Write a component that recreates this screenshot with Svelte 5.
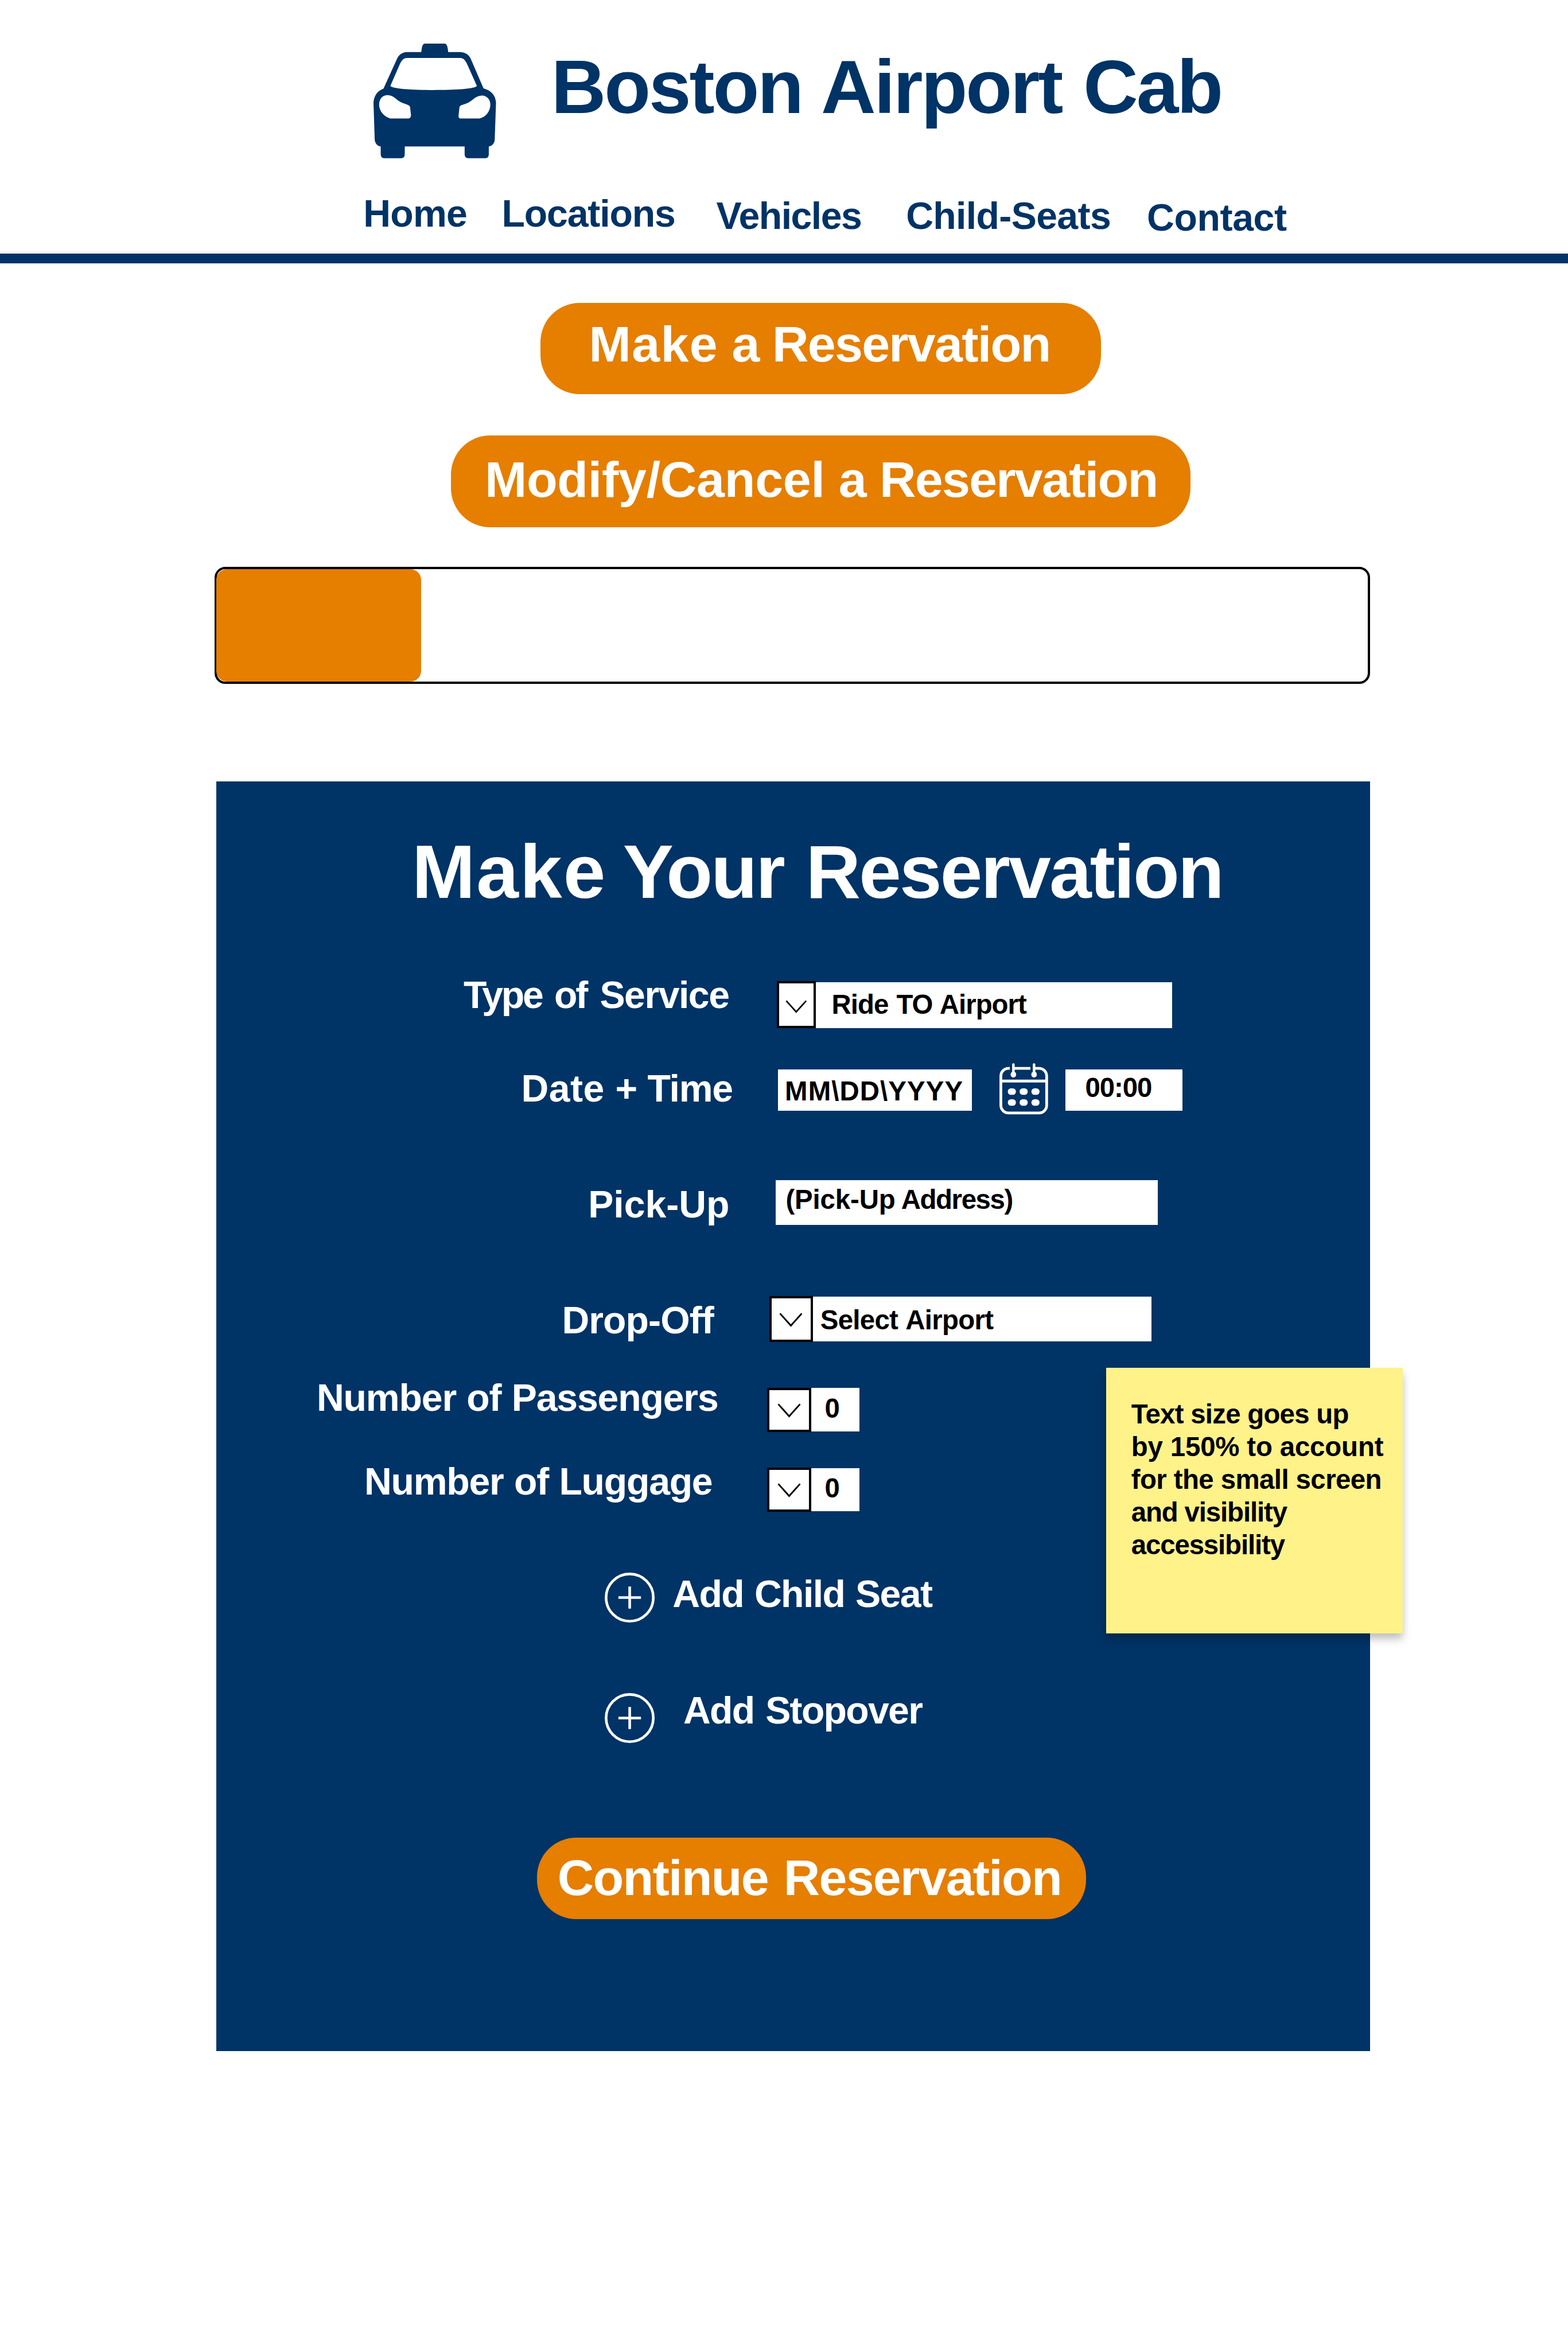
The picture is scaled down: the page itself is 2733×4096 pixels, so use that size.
<script>
  const nav = [
    { label: 'Home', cls: 'home' },
    { label: 'Locations', cls: 'locations' },
    { label: 'Vehicles', cls: 'vehicles' },
    { label: 'Child-Seats', cls: 'child-seats' },
    { label: 'Contact', cls: 'contact' }
  ];
</script>

{#snippet dropdown()}
  <span class="arrow">
    <svg viewBox="0 0 48 30" aria-hidden="true">
      <path d="M1.8 1.6 24 26.4 46.2 1.6" fill="none" stroke="#000" stroke-width="3.4" />
    </svg>
  </span>
{/snippet}

{#snippet plus()}
  <svg class="plus" viewBox="0 0 102 102" fill="none" stroke="#fff" stroke-width="5.4" aria-hidden="true">
    <circle cx="51" cy="51" r="48.2" />
    <path d="M28 51H74M51 28.5V73.5" />
  </svg>
{/snippet}

<div class="page">
  <header>
    <div class="brand">
      <svg class="taxi" viewBox="0 0 250 234" aria-hidden="true">
        <path
          fill="#003366"
          fill-rule="evenodd"
          d="M97.6 17.3C98.3 9 99.5 4.5 101 2.2Q102.3 0 105 0H145Q147.7 0 149 2.2C150.5 4.5 151.8 9 152.5 17.3H177C187 17.5 195 23 198.5 31L224.5 91.3C241 96 249.5 106 250 121L247.4 196C247 203 242 209 235.3 210V226Q235.3 234 227.3 234H194Q186 234 186 226V210H63.8V226Q63.8 234 55.8 234H22.7Q14.7 234 14.7 226V210C8 209 3 203 2.5 196L0 121C.5 107 8 96.5 20.4 92L48 31C51.5 23 59 17.5 68 17.3Z
             M68 29.3H177C183 29.3 187 33.5 190.7 41L211 86.3C207 92 171 94.7 124 94.7C77 94.7 38.5 92 34.4 86.3L54.2 41C58 33.5 62 29.3 68 29.3Z
             M28 105C17.5 105.5 11.5 114 11.5 124.3C11.5 138 21.5 149 34.4 152.7H71.5C74.5 152.7 76.5 149.5 76.5 146L74.6 129C73 125 65 123.5 58.7 121C46.5 116 42.5 105 28 105Z
             M221.5 106C231 106 238.5 114 238.5 124.3C238.5 138 229 150 216.2 152.7H177.3C175 152.7 173.5 150.5 173.5 147.7L175.4 130C176 125.5 185 124.5 192.6 121C203 116 208.5 106 221.5 106Z"
        />
      </svg>
      <h1>Boston Airport Cab</h1>
    </div>
    <nav>
      {#each nav as item}
        <span class={item.cls}>{item.label}</span>
      {/each}
    </nav>
  </header>

  <div class="actions">
    <button class="pill make"><span><span class="wide">Make</span> a Reservation</span></button>
    <button class="pill modify"><span><span class="semi">Modify/Cancel</span> a Reservation</span></button>
  </div>

  <div class="progress"><div class="fill"></div></div>

  <section class="panel">
    <h2><span class="wide">Make</span> Your Reservation</h2>

    <div class="row service">
      <span class="label"><span class="tight">Type of</span> Service</span>
      {@render dropdown()}
      <span class="field">Ride TO Airport</span>
    </div>

    <div class="row datetime">
      <span class="label"><span class="wide">Date</span> + Time</span>
      <span class="field date">MM\DD\YYYY</span>
      <svg class="calendar" viewBox="0 0 99.3 104.6" aria-hidden="true">
        <g fill="none" stroke="#fff" stroke-width="5.6">
          <path d="M21.2 10.7H18.5A15.6 15.6 0 0 0 2.9 26.3V86.2A15.6 15.6 0 0 0 18.5 101.8H80.8A15.6 15.6 0 0 0 96.4 86.2V26.3A15.6 15.6 0 0 0 80.8 10.7H71" />
          <path d="M28.5 10.7H63.2M3 36.6H96" />
          <path d="M28.5 2.8V20M70.7 2.8V20" stroke-width="5.2" stroke-linecap="round" />
        </g>
        <g fill="#fff">
          <ellipse cx="28.5" cy="23.4" rx="5.7" ry="6" />
          <ellipse cx="70.7" cy="23.4" rx="5.7" ry="6" />
          {#each [51.5, 73.8] as y}
            {#each [17.1, 41.2, 65.3] as x}
              <rect {x} {y} width="16.5" height="13.2" rx="6.2" />
            {/each}
          {/each}
        </g>
      </svg>
      <span class="field time">00:00</span>
    </div>

    <div class="row pickup">
      <span class="label">Pick-Up</span>
      <span class="field"><span class="semi">(Pick-Up</span> Address)</span>
    </div>

    <div class="row dropoff">
      <span class="label">Drop-Off</span>
      {@render dropdown()}
      <span class="field">Select Airport</span>
    </div>

    <div class="row count passengers">
      <span class="label">Number of Passengers</span>
      {@render dropdown()}
      <span class="field">0</span>
    </div>

    <div class="row count luggage">
      <span class="label">Number of Luggage</span>
      {@render dropdown()}
      <span class="field">0</span>
    </div>

    <div class="row add seat">
      {@render plus()}
      <span class="label">Add Child Seat</span>
    </div>

    <div class="row add stopover">
      {@render plus()}
      <span class="label">Add Stopover</span>
    </div>

    <button class="pill continue"><span>Continue Reservation</span></button>

    <aside class="note">
      <span class="l1">Text size goes up</span>
      <span class="l2">by 150% to account</span>
      <span class="l3">for the small screen</span>
      <span class="l4">and visibility</span>
      <span class="l4">accessibility</span>
    </aside>
  </section>
</div>

<style>
  /* 1rem is 1/32 of the page width, so every length scales with the window */
  :global(html) {
    font-size: calc(100vw / 32);
  }

  :global(body) {
    margin: 0;
    background: #fff;
    overflow: hidden;
  }

  .page {
    height: 47.96rem;
    overflow: hidden;
    background: #fff;
    color: #003366;
    font-family: 'Liberation Sans', Arial, sans-serif;
    font-weight: 700;
    line-height: 1;
    white-space: nowrap;
  }

  .page,
  .page * {
    box-sizing: border-box;
  }

  svg {
    display: block;
    flex: none;
    overflow: visible;
  }

  h1,
  h2 {
    margin: 0;
    font-size: 1.55rem;
    font-weight: 700;
    line-height: 1;
  }

  /* tracking of single words inside a line */
  .wide {
    letter-spacing: 0.0155em;
  }

  .semi {
    letter-spacing: -0.003em;
  }

  .tight {
    letter-spacing: -0.049em;
  }

  header {
    height: 5.375rem;
    padding-top: 0.89rem;
    border-bottom: 0.21rem solid #003366;
  }

  .brand {
    display: flex;
    align-items: flex-start;
    gap: 1.125rem;
    padding-left: 7.625rem;
  }

  .taxi {
    width: 2.5rem;
    height: 2.34rem;
  }

  h1 {
    margin-top: 0.101rem;
    letter-spacing: -0.0235em;
    word-spacing: 0.032em;
  }

  nav {
    display: grid;
    grid-template-columns: 2.824rem 4.38rem 3.87rem 4.917rem auto;
    align-items: start;
    margin-top: 0.742rem;
    padding-left: 7.416rem;
    font-size: 0.775rem;
  }

  .home {
    letter-spacing: -0.0121em;
  }

  .locations {
    letter-spacing: -0.0176em;
  }

  .vehicles {
    margin-top: 0.04rem;
    letter-spacing: -0.0233em;
  }

  .child-seats {
    margin-top: 0.04rem;
    letter-spacing: -0.0097em;
  }

  .contact {
    margin-top: 0.084rem;
    letter-spacing: -0.0059em;
  }

  .actions {
    display: flex;
    flex-direction: column;
    align-items: center;
    gap: 0.84rem;
    padding: 0.802rem 0 0 1.5rem;
  }

  .pill {
    display: flex;
    align-items: flex-start;
    height: 1.873rem;
    margin: 0;
    border: 0;
    border-radius: 0.8rem;
    background: #e67e00;
    color: #fff;
    font: inherit;
    font-size: 1.03rem;
    line-height: 1;
    white-space: nowrap;
  }

  .make {
    width: 11.433rem;
    padding: 0.328rem 0 0 0.987rem;
    letter-spacing: -0.0195em;
    word-spacing: 0.007em;
  }

  .modify {
    width: 15.087rem;
    padding: 0.388rem 0 0 0.686rem;
    letter-spacing: -0.0198em;
    word-spacing: 0.016em;
  }

  .progress {
    width: 23.59rem;
    height: 2.393rem;
    margin: 0.805rem 0 0 4.375rem;
    padding-top: 0.006rem;
    border: 0.047rem solid #000;
    border-radius: 0.22rem;
  }

  .fill {
    width: 4.19rem;
    height: 2.286rem;
    margin-left: -0.012rem;
    border-radius: 0.22rem;
    background: #e67e00;
  }

  .panel {
    position: relative;
    width: 23.543rem;
    height: 25.92rem;
    margin: 1.983rem 0 0 4.417rem;
    padding-top: 1.07rem;
    background: #003366;
    color: #fff;
  }

  h2 {
    padding-left: 3.99rem;
    letter-spacing: -0.0215em;
    word-spacing: 0.035em;
  }

  h2 .wide {
    margin-right: -0.059em;
  }

  .row {
    display: flex;
    align-items: flex-start;
  }

  .label {
    flex: none;
    font-size: 0.775rem;
  }

  .field {
    flex: none;
    background: #fff;
    color: #000;
    font-size: 0.555rem;
  }

  .arrow {
    display: flex;
    flex: none;
    align-items: center;
    justify-content: center;
    width: 0.896rem;
    height: 100%;
    padding-top: 0.04rem;
    border: 0.047rem solid #000;
    background: #fff;
  }

  .arrow svg {
    width: 0.48rem;
    height: 0.3rem;
  }

  .service {
    height: 0.96rem;
    margin-top: 1.46rem;
    padding-left: 5.043rem;
  }

  .service .label {
    width: 6.391rem;
    margin-top: -0.111rem;
    letter-spacing: -0.0227em;
    word-spacing: 0.098em;
  }

  .service .arrow {
    width: 0.798rem;
    padding-top: 0.08rem;
  }

  .service .arrow svg {
    width: 0.44rem;
  }

  .service .field {
    width: 7.269rem;
    height: 0.943rem;
    margin-top: 0.017rem;
    padding: 0.18rem 0 0 0.323rem;
    letter-spacing: -0.0205em;
    word-spacing: 0.04em;
  }

  .datetime {
    height: 1.046rem;
    margin-top: 0.711rem;
    padding-left: 6.22rem;
  }

  .datetime .label {
    width: 5.239rem;
    margin-top: 0.128rem;
    letter-spacing: -0.0179em;
    word-spacing: 0.02em;
  }

  .datetime .wide {
    letter-spacing: 0.0077em;
  }

  .datetime .field {
    height: 0.836rem;
    margin-top: 0.136rem;
  }

  .date {
    width: 3.961rem;
    padding: 0.164rem 0 0 0.143rem;
    letter-spacing: 0.0228em;
  }

  .calendar {
    width: 0.993rem;
    height: 1.046rem;
    margin: 0 0.355rem 0 0.563rem;
  }

  .time {
    width: 2.382rem;
    padding: 0.088rem 0 0 0.399rem;
    letter-spacing: -0.022em;
  }

  .pickup {
    height: 0.92rem;
    margin-top: 1.34rem;
    padding-left: 7.586rem;
  }

  .pickup .label {
    width: 3.833rem;
    margin-top: 0.109rem;
  }

  .pickup .field {
    width: 7.789rem;
    height: 0.92rem;
    padding: 0.126rem 0 0 0.199rem;
    letter-spacing: -0.0296em;
    word-spacing: 0.003em;
  }

  .dropoff {
    height: 0.933rem;
    margin-top: 1.45rem;
    padding-left: 7.051rem;
  }

  .dropoff .label {
    width: 4.228rem;
    margin-top: 0.109rem;
    letter-spacing: -0.014em;
  }

  .dropoff .field {
    width: 6.903rem;
    height: 0.916rem;
    margin-top: 0.01rem;
    padding: 0.204rem 0 0 0.15rem;
    letter-spacing: -0.015em;
    word-spacing: 0.05em;
  }

  .count {
    height: 0.907rem;
  }

  .count .field {
    width: 0.987rem;
    height: 0.883rem;
    margin-top: 0.01rem;
    padding: 0.13rem 0 0 0.279rem;
  }

  .passengers {
    margin-top: 0.937rem;
    padding-left: 2.046rem;
  }

  .passengers .label {
    width: 9.195rem;
    margin-top: -0.181rem;
    letter-spacing: -0.0177em;
    word-spacing: 0.017em;
  }

  .luggage {
    margin-top: 0.723rem;
    padding-left: 3.018rem;
  }

  .luggage .label {
    width: 8.223rem;
    margin-top: -0.101rem;
    letter-spacing: -0.0188em;
    word-spacing: 0.02em;
  }

  .add {
    height: 1.02rem;
    padding-left: 7.923rem;
  }

  .plus {
    width: 1.02rem;
    height: 1.02rem;
  }

  .seat {
    margin-top: 1.243rem;
  }

  .seat .label {
    margin: 0.042rem 0 0 0.366rem;
    letter-spacing: -0.0243em;
    word-spacing: 0.031em;
  }

  .stopover {
    margin-top: 1.437rem;
  }

  .stopover .label {
    margin: -0.038rem 0 0 0.585rem;
    letter-spacing: -0.0258em;
    word-spacing: 0.045em;
  }

  .continue {
    width: 11.204rem;
    height: 1.667rem;
    margin: 1.923rem 0 0 6.543rem;
    padding: 0.307rem 0 0 0.418rem;
    letter-spacing: -0.0198em;
    word-spacing: 0.047em;
  }

  /* sticky note pinned over the panel's right edge */
  .note {
    position: absolute;
    top: 11.971rem;
    left: 18.162rem;
    display: flex;
    flex-direction: column;
    width: 6.047rem;
    height: 5.421rem;
    padding: 0.623rem 0 0 0.508rem;
    background: #fff289;
    box-shadow: 0 0.12rem 0.16rem rgba(0, 0, 0, 0.26);
    color: #000;
    font-size: 0.555rem;
    line-height: 0.666rem;
  }

  .l1 {
    letter-spacing: -0.0156em;
  }

  .l2 {
    letter-spacing: -0.0034em;
  }

  .l3 {
    letter-spacing: -0.0122em;
  }

  .l4 {
    letter-spacing: -0.024em;
  }
</style>
